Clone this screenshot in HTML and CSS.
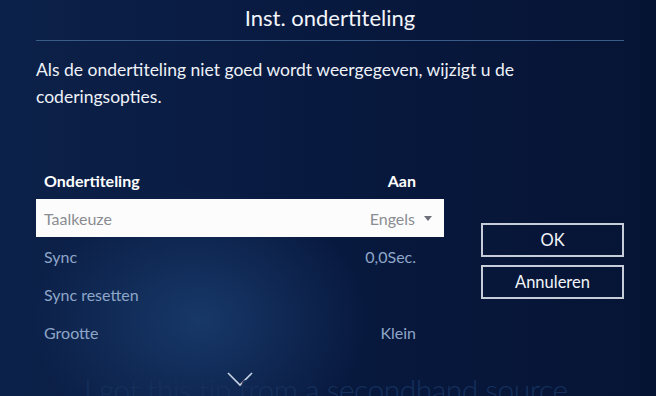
FILE: index.html
```html
<!DOCTYPE html>
<html>
<head>
    <meta charset="utf-8">
    <title>Inst. ondertiteling</title>
<link rel="stylesheet" href="styles.css">
</head>
<body>

  <div class="screen">
    <h1 class="title">Inst. ondertiteling</h1>

    <p class="intro">Als de ondertiteling niet goed wordt weergegeven, wijzigt u de<br>coderingsopties.</p>

    <div class="content">
      <ul class="options">
        <li class="option head"><span>Ondertiteling</span><span>Aan</span></li>
        <li class="option selected"><span>Taalkeuze</span><span class="value">Engels<span class="arrow"></span></span></li>
        <li class="option"><span>Sync</span><span>0,0Sec.</span></li>
        <li class="option"><span>Sync resetten</span></li>
        <li class="option"><span>Grootte</span><span>Klein</span></li>
      </ul>

      <div class="buttons">
        <button class="btn">OK</button>
        <button class="btn">Annuleren</button>
      </div>
    </div>

    <div class="more">
      <svg width="26" height="15" viewBox="0 0 26 15">
        <path d="M1 1 L13 13 L25 1" fill="none" stroke="#c7d3e6" stroke-width="1.6"/>
      </svg>
    </div>

    <div class="watermark">I got this tip from a secondhand source</div>
  </div>

</body>
</html>
```

FILE: styles.css
```css
body {
  margin: 0;
  background: #06153a;
  font-family: Lato, "Liberation Sans", sans-serif;
}

.screen {
  position: relative;
  width: 656px;
  height: 396px;
  overflow: hidden;
  background:
    radial-gradient(ellipse 240px 190px at 200px 320px, rgba(40, 90, 150, 0.45), rgba(40, 90, 150, 0) 70%),
    linear-gradient(90deg, #0c2149 0%, #08193f 50%, #061434 100%);
}

.title {
  margin: 0 32px 0 36px;
  height: 40px;
  line-height: 36px;
  border-bottom: 1px solid #3a5c88;
  text-align: center;
  font-size: 22px;
  font-weight: normal;
  color: #f2f5fa;
}

.intro {
  margin: 15px 0 0 36px;
  font-size: 17.5px;
  line-height: 27px;
  color: #eef2f8;
}

.content {
  display: flex;
  margin-top: 51px;
}

.options {
  list-style: none;
  margin: 0 0 0 36px;
  padding: 0;
  width: 408px;
}

.option {
  display: flex;
  justify-content: space-between;
  align-items: center;
  height: 38px;
  padding: 0 28px 0 8px;
  font-size: 16px;
  color: #8ea6c8;
}

.option.head {
  color: #fff;
  font-weight: bold;
}

.option.selected {
  background: #fcfcfd;
  color: #8a8c92;
  padding-right: 12px;
}

.value {
  display: flex;
  align-items: center;
}

.arrow {
  margin-left: 9px;
  border-left: 4px solid transparent;
  border-right: 4px solid transparent;
  border-top: 5px solid #6d7078;
}

.buttons {
  display: flex;
  flex-direction: column;
  gap: 8px;
  margin: 62px 0 0 37px;
}

.btn {
  width: 143px;
  height: 34px;
  background: transparent;
  border: 2px solid #c6cdd8;
  color: #f2f5fa;
  font-family: inherit;
  font-size: 16.5px;
}

.more {
  display: flex;
  justify-content: center;
  margin: 21px 0 0 -176px;
}

.watermark {
  position: absolute;
  left: 84px;
  top: 371px;
  font-size: 30px;
  font-weight: 300;
  letter-spacing: -0.5px;
  color: #15305c;
  white-space: nowrap;
}
```
